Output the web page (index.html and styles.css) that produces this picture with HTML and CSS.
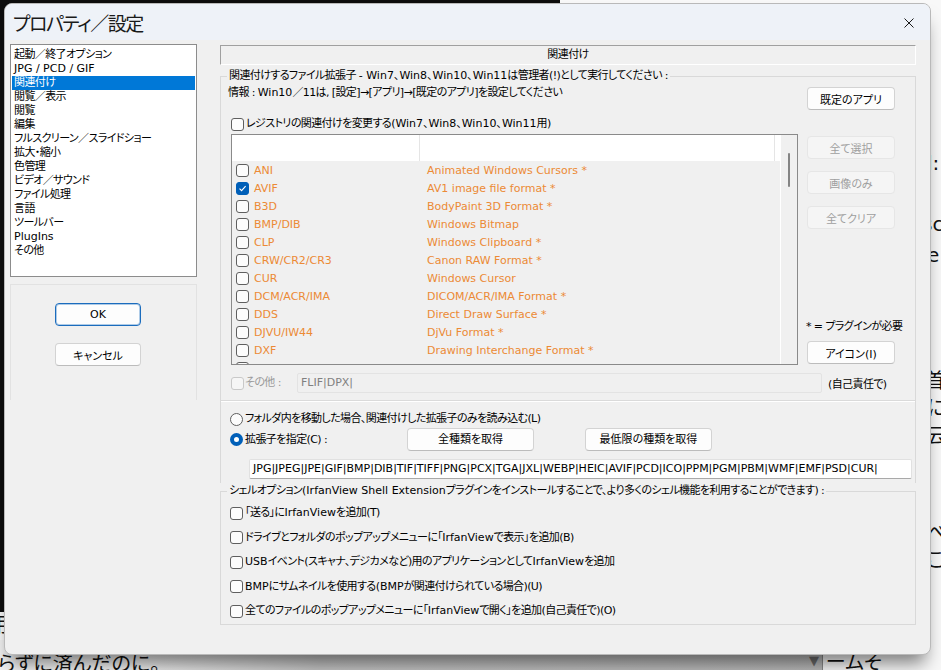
FILE: index.html
```html
<!DOCTYPE html>
<html lang="ja">

<head>
    <meta charset="UTF-8">
    <title>プロパティ／設定</title>
    <link rel="stylesheet" href="styles.css">
</head>

<body>
    <div class="desktop">
        <div class="desk-dark"></div>
        <div class="desk-band"></div>
        <div class="desk-text t-l">l:</div>
        <div class="desk-text t-sc">sc</div>
        <div class="desk-text t-e">e</div>
        <div class="desk-text t-kubi">首</div>
        <div class="desk-text t-ni">に</div>
        <div class="desk-text t-un">云</div>
        <div class="desk-text t-be">べ</div>
        <div class="desk-text t-ko">こ</div>
        <div class="desk-text t-you">用</div>
        <div class="desk-text t-bottom">らずに済んだのに。</div>
        <div class="desk-arrow">▼</div>
        <div class="desk-text t-frame">ームそ</div>

        <div class="dialog">
            <div class="titlebar">
                <span class="titlebar__text">プロパティ／設定</span>
                <svg class="titlebar__close" width="10" height="10" viewBox="0 0 10 10">
                    <path d="M0.5 0.5L9.5 9.5M9.5 0.5L0.5 9.5" stroke="#1b1b1b" stroke-width="1" fill="none"/>
                </svg>
            </div>
            <div class="dialog__body">
                <div class="side">
                    <ul class="pagelist">
                        <li>起動／終了オプション</li>
                        <li class="en">JPG / PCD / GIF</li>
                        <li class="selected">関連付け</li>
                        <li>閲覧／表示</li>
                        <li>閲覧</li>
                        <li>編集</li>
                        <li>フルスクリーン／スライドショー</li>
                        <li>拡大・縮小</li>
                        <li>色管理</li>
                        <li>ビデオ／サウンド</li>
                        <li>ファイル処理</li>
                        <li>言語</li>
                        <li>ツールバー</li>
                        <li class="en">PlugIns</li>
                        <li>その他</li>
                    </ul>
                    <div class="side__panel">
                        <button class="btn btn--default side__ok">OK</button>
                        <button class="btn side__cancel">キャンセル</button>
                    </div>
                </div>

                <div class="page">
                    <div class="page__title">関連付け</div>

                    <fieldset class="group group--assoc">
                        <legend>関連付けするファイル拡張子 <span class="en">- Win7、Win8、Win10、Win11</span>は管理者(!)として実行してください :</legend>
                        <div class="assoc">
                            <div class="assoc__top">
                                <div class="assoc__main">
                                    <div class="assoc__info">情報 : <span class="en">Win10</span>／11は, [設定]→[アプリ]→[既定のアプリ]を設定してください</div>
                                    <div class="check assoc__registry"><span class="box"></span>レジストリの関連付けを変更する<span class="en">(Win7、Win8、Win10、Win11</span>用)</div>
                                    <div class="listview">
                                        <div class="listview__content">
                                            <div class="listview__head"><span class="listview__col1"></span><span class="listview__col2"></span></div>
                                            <div class="lvrow"><span class="box"></span><span>ANI</span><span>Animated Windows Cursors *</span></div>
                                            <div class="lvrow"><span class="box box--on"><svg width="9" height="9" viewBox="0 0 9 9"><path d="M1.5 4.6L3.6 6.7L7.6 2.2" fill="none" stroke="#fff" stroke-width="1.1"/></svg></span><span>AVIF</span><span>AV1 image file format *</span></div>
                                            <div class="lvrow"><span class="box"></span><span>B3D</span><span>BodyPaint 3D Format *</span></div>
                                            <div class="lvrow"><span class="box"></span><span>BMP/DIB</span><span>Windows Bitmap</span></div>
                                            <div class="lvrow"><span class="box"></span><span>CLP</span><span>Windows Clipboard *</span></div>
                                            <div class="lvrow"><span class="box"></span><span>CRW/CR2/CR3</span><span>Canon RAW Format *</span></div>
                                            <div class="lvrow"><span class="box"></span><span>CUR</span><span>Windows Cursor</span></div>
                                            <div class="lvrow"><span class="box"></span><span>DCM/ACR/IMA</span><span>DICOM/ACR/IMA Format *</span></div>
                                            <div class="lvrow"><span class="box"></span><span>DDS</span><span>Direct Draw Surface *</span></div>
                                            <div class="lvrow"><span class="box"></span><span>DJVU/IW44</span><span>DjVu Format *</span></div>
                                            <div class="lvrow"><span class="box"></span><span>DXF</span><span>Drawing Interchange Format *</span></div>
                                            <div class="lvrow"><span class="box"></span><span>ECW</span><span>Enhanced Compressed Wavelet *</span></div>
                                        </div>
                                        <div class="listview__scroll"><span class="listview__thumb"></span></div>
                                    </div>
                                </div>
                                <div class="assoc__side">
                                    <button class="btn btn--side">既定のアプリ</button>
                                    <button class="btn btn--side btn--gap" disabled>全て選択</button>
                                    <button class="btn btn--side" disabled>画像のみ</button>
                                    <button class="btn btn--side" disabled>全てクリア</button>
                                    <div class="assoc__note">* = プラグインが必要</div>
                                    <button class="btn btn--side">アイコン(I)</button>
                                </div>
                            </div>

                            <div class="other">
                                <span class="box box--disabled"></span>
                                <span class="other__label">その他 :</span>
                                <span class="field field--disabled other__field">FLIF|DPX|</span>
                                <span class="other__note">(自己責任で)</span>
                            </div>

                            <div class="separator"></div>

                            <div class="check radio-row"><span class="radio"></span>フォルダ内を移動した場合、関連付けした拡張子のみを読み込む(L)</div>
                            <div class="check radio-row radio-row--buttons">
                                <span class="radio radio--on"></span>
                                <span class="radio-row__label">拡張子を指定(C) :</span>
                                <button class="btn btn--wide">全種類を取得</button>
                                <button class="btn btn--wide">最低限の種類を取得</button>
                            </div>
                            <div class="field ext-field">JPG|JPEG|JPE|GIF|BMP|DIB|TIF|TIFF|PNG|PCX|TGA|JXL|WEBP|HEIC|AVIF|PCD|ICO|PPM|PGM|PBM|WMF|EMF|PSD|CUR|</div>
                        </div>
                    </fieldset>

                    <fieldset class="group group--shell">
                        <legend>シェルオプション<span class="en">(IrfanView Shell Extension</span>プラグインをインストールすることで、より多くのシェル機能を利用することができます) :</legend>
                        <div class="shell">
                            <div class="check"><span class="box"></span>「送る」に<span class="en">IrfanView</span>を追加(T)</div>
                            <div class="check"><span class="box"></span>ドライブとフォルダのポップアップメニューに「<span class="en">IrfanView</span>で表示」を追加(B)</div>
                            <div class="check"><span class="box"></span><span class="en">USB</span>イベント(スキャナ、デジカメなど)用のアプリケーションとして<span class="en">IrfanView</span>を追加</div>
                            <div class="check"><span class="box"></span><span class="en">BMP</span>にサムネイルを使用する<span class="en">(BMP</span>が関連付けられている場合)(U)</div>
                            <div class="check"><span class="box"></span>全てのファイルのポップアップメニューに「<span class="en">IrfanView</span>で開く」を追加(自己責任で)(O)</div>
                        </div>
                    </fieldset>
                </div>
            </div>
        </div>
    </div>
</body>

</html>
```

FILE: styles.css
```css
* {
    box-sizing: border-box;
}

html, body {
    margin: 0;
}

body {
    width: 941px;
    height: 670px;
    overflow: hidden;
    font-family: "DejaVu Sans", "Noto Sans CJK JP", sans-serif;
    font-size: 11px;
    font-feature-settings: "palt";
    color: #000;
}

/* background windows */
.desktop {
    position: relative;
    width: 941px;
    height: 670px;
    overflow: hidden;
    background: #f8f8f8;
}
.desk-dark {
    position: absolute;
    left: 0;
    top: 0;
    width: 560px;
    height: 612px;
    background: #0d0d0d;
}
.desk-band {
    position: absolute;
    left: 0;
    top: 640px;
    width: 823px;
    height: 30px;
    background: linear-gradient(to right, #f2f2f2 0, #f2f2f2 120px, #c4c4c4 320px, #b8b8b8 100%);
    border-right: 1px solid #8a8a8a;
}
.desk-text {
    position: absolute;
    font-family: "DejaVu Sans", "Noto Sans CJK JP", sans-serif;
    font-size: 20px;
    line-height: 24px;
    color: #111;
    white-space: nowrap;
}
.t-l { left: 927px; top: 151px; }
.t-sc { left: 922px; top: 212px; }
.t-e { left: 927px; top: 243px; }
.t-kubi { left: 925px; top: 369px; }
.t-ni { left: 927px; top: 396px; }
.t-un { left: 926px; top: 424px; }
.t-be { left: 926px; top: 521px; }
.t-ko { left: 927px; top: 548px; }
.t-you { left: -11px; top: 613px; }
.t-bottom { left: -2px; top: 652px; }
.t-frame { left: 826px; top: 650px; }
.desk-arrow {
    position: absolute;
    left: 809px;
    top: 653px;
    font-size: 13px;
    color: #6a6a6a;
}

/* dialog */
.dialog {
    position: absolute;
    left: 4px;
    top: 3px;
    width: 927px;
    height: 652px;
    border: 1px solid #b9b9b9;
    border-radius: 8px;
    background: #f0f0f0;
    box-shadow: 0 14px 18px -6px rgba(0, 0, 0, 0.5);
    overflow: hidden;
    z-index: 1;
    letter-spacing: -0.6px;
}
.en,
.lvrow,
.field,
.btn {
    letter-spacing: 0;
}

.titlebar {
    height: 36px;
    display: flex;
    align-items: center;
    justify-content: space-between;
    padding: 0 16px 0 8px;
    background: #eef2f8;
}
.titlebar__text {
    font-family: "Noto Sans CJK JP", sans-serif;
    font-size: 19px;
    line-height: 24px;
    letter-spacing: -1.5px;
    color: #1a1a1a;
    margin-top: 1px;
}
.titlebar__close {
    display: block;
    margin-top: 1px;
}

.dialog__body {
    display: flex;
    gap: 23px;
    padding: 0 14px 0 5px;
}

/* left side */
.side {
    width: 187px;
    flex: none;
}
.pagelist {
    list-style: none;
    margin: 4px 0 0;
    padding: 3px 0 0;
    height: 233px;
    background: #fff;
    border: 1px solid #8c8c8c;
}
.pagelist li {
    height: 14px;
    line-height: 14px;
    margin: 0 1px;
    padding-left: 2px;
    white-space: nowrap;
}
.pagelist li.selected {
    background: #0078d7;
    color: #fff;
}
.side__panel {
    margin-top: 7px;
    height: 116px;
    border: 1px solid #e2e2e2;
    border-bottom: none;
    display: flex;
    flex-direction: column;
    padding: 18px 0 0 44px;
}
.side__cancel {
    margin-top: 17px;
}
.side .btn {
    width: 86px;
}

/* buttons and fields */
.btn {
    font: inherit;
    color: #000;
    height: 23px;
    padding: 0;
    background: #fdfdfd;
    border: 1px solid #d3d3d3;
    border-bottom-color: #bcbcbc;
    border-radius: 4px;
    display: flex;
    align-items: center;
    justify-content: center;
    white-space: nowrap;
}
.btn:disabled {
    background: #f5f5f5;
    border-color: #e6e6e6;
    color: #9f9f9f;
}
.btn--default {
    border-color: #1b6cbd;
    box-shadow: inset 0 0 0 1px rgba(27, 108, 189, 0.35);
}
.field {
    height: 20px;
    line-height: 18px;
    padding-left: 3px;
    background: #fff;
    border: 1px solid #e1e1e1;
    border-bottom-color: #a9a9a9;
    border-radius: 2px;
    white-space: nowrap;
    overflow: hidden;
}
.field--disabled {
    background: #f0f0f0;
    border-color: #e3e3e3;
    color: #808080;
}

.check {
    display: flex;
    align-items: center;
    height: 14px;
    line-height: 14px;
    white-space: nowrap;
}
.check > .box,
.check > .radio {
    margin-right: 2px;
}
.box {
    width: 13px;
    height: 13px;
    flex: none;
    border: 1px solid #5f5f5f;
    border-radius: 3px;
    background: #fcfcfc;
    display: flex;
    align-items: center;
    justify-content: center;
}
.box--on {
    background: #005fb8;
    border-color: #005fb8;
}
.box--disabled {
    border-color: #c9c9c9;
    background: #f6f6f6;
}
.radio {
    width: 13px;
    height: 13px;
    flex: none;
    border: 1px solid #5f5f5f;
    border-radius: 50%;
    background: #fcfcfc;
}
.radio--on {
    border: 4px solid #005fb8;
    background: #fff;
}

/* right page */
.page {
    width: 696px;
    flex: none;
}
.page__title {
    margin-top: 5px;
    height: 20px;
    line-height: 18px;
    text-align: center;
    border: 1px solid #fff;
    border-top-color: #a0a0a0;
    border-left-color: #a0a0a0;
}

.group {
    margin: 0;
    padding: 0;
    min-width: 0;
    border: 1px solid #d9d9d9;
}
.group legend {
    margin-left: 6px;
    padding: 0 2px;
    line-height: 14px;
    white-space: nowrap;
}
.group--assoc {
    margin-top: 4px;
    border-bottom: none;
}
.group--shell {
    margin-top: 1px;
}

.assoc {
    padding: 3px 20px 4px 7px;
}
.assoc__top {
    display: flex;
    gap: 9px;
}
.assoc__main {
    flex: 1;
}
.assoc__info {
    line-height: 14px;
    white-space: nowrap;
}
.assoc__registry {
    margin: 17px 0 0 3px;
}
.assoc__side {
    width: 88px;
    flex: none;
    display: flex;
    flex-direction: column;
}
.btn--side {
    width: 88px;
    margin-top: 12px;
}
.btn--side:first-child {
    margin-top: 1px;
}
.btn--gap {
    margin-top: 26px;
}
.assoc__note {
    margin: auto 0 0 -1px;
    line-height: 14px;
    white-space: nowrap;
}
.assoc__note + .btn--side {
    margin-top: 7px;
    margin-bottom: 1px;
}

.listview {
    margin: 3px 0 0 3px;
    height: 231px;
    border: 1px solid #8a8a8a;
    display: flex;
    overflow: hidden;
}
.listview__content {
    flex: 1;
}
.listview__head {
    height: 26px;
    background: #fff;
    display: flex;
}
.listview__col1 {
    width: 188px;
    border-right: 1px solid #e5e5e5;
}
.listview__col2 {
    width: 355px;
    border-right: 1px solid #e5e5e5;
}
.listview__scroll {
    width: 17px;
    flex: none;
    border-left: 1px solid #fff;
    position: relative;
}
.listview__thumb {
    position: absolute;
    left: 7px;
    top: 18px;
    width: 2px;
    height: 34px;
    border-radius: 1px;
    background: #858585;
}
.lvrow {
    display: grid;
    grid-template-columns: 13px 168px 1fr;
    column-gap: 5px;
    align-items: center;
    height: 18px;
    padding-left: 4px;
    color: #ec8a35;
    white-space: nowrap;
}

.other {
    display: flex;
    align-items: center;
    margin-top: 8px;
    padding-left: 3px;
    height: 20px;
}
.other__label {
    width: 52px;
    margin-left: 1px;
    color: #9a9a9a;
    line-height: 14px;
}
.other__field {
    width: 525px;
    flex: none;
}
.other__note {
    margin-left: 6px;
    white-space: nowrap;
}

.separator {
    margin: 7px -20px 0 -7px;
    height: 2px;
    border-top: 1px solid #dadada;
    border-bottom: 1px solid #fff;
}

.radio-row {
    margin-top: 10px;
    padding-left: 2px;
}
.radio-row--buttons {
    margin-top: 2px;
    height: 23px;
}
.radio-row__label {
    width: 162px;
    flex: none;
}
.btn--wide {
    width: 127px;
}
.btn--wide + .btn--wide {
    margin-left: 51px;
}
.ext-field {
    margin: 8px -17px 0 21px;
}

.shell {
    display: flex;
    flex-direction: column;
    gap: 10.5px;
    padding: 8px 0 6px 9px;
}
```
